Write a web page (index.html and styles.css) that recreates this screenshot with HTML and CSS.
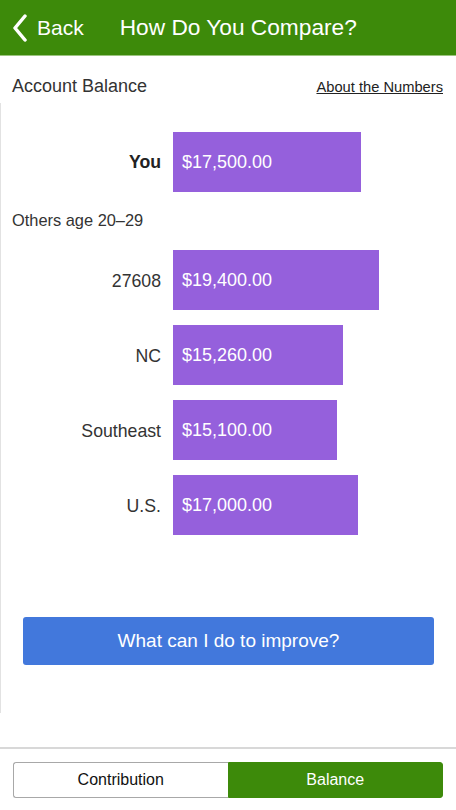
FILE: index.html
```html
<!DOCTYPE html>
<html lang="en">
<head>
    <meta charset="UTF-8">
    <meta name="viewport" content="width=device-width, initial-scale=1.0">
    <title>How Do You Compare?</title>
    <link rel="stylesheet" href="styles.css">
</head>
<body>
    <header class="topbar">
        <a class="back" href="#">
            <svg class="chevron" width="16" height="28" viewBox="0 0 16 28">
                <path d="M13 2 L3 14 L13 26" fill="none" stroke="#fff" stroke-width="3.5" stroke-linecap="round" stroke-linejoin="round"/>
            </svg>
            Back
        </a>
        <h1 class="title">How Do You Compare?</h1>
    </header>

    <div class="summary">
        <span class="summary-label">Account Balance</span>
        <a class="summary-link" href="#">About the Numbers</a>
    </div>

    <div class="chart">
        <div class="bar-row">
            <span class="bar-label you">You</span>
            <div class="bar" style="width: 188px">$17,500.00</div>
        </div>
        <div class="group-label">Others age 20&ndash;29</div>
        <div class="bar-row">
            <span class="bar-label">27608</span>
            <div class="bar" style="width: 206px">$19,400.00</div>
        </div>
        <div class="bar-row">
            <span class="bar-label">NC</span>
            <div class="bar" style="width: 170px">$15,260.00</div>
        </div>
        <div class="bar-row">
            <span class="bar-label">Southeast</span>
            <div class="bar" style="width: 164px">$15,100.00</div>
        </div>
        <div class="bar-row">
            <span class="bar-label">U.S.</span>
            <div class="bar" style="width: 185px">$17,000.00</div>
        </div>

        <button class="improve">What can I do to improve?</button>
    </div>

    <nav class="tabs">
        <a class="tab" href="#">Contribution</a>
        <a class="tab active" href="#">Balance</a>
    </nav>
</body>
</html>
```

FILE: styles.css
```css
body {
    font-family: "Liberation Sans", Arial, sans-serif;
    margin: 0;
    padding: 0;
    background-color: #fff;
    color: #333;
    width: 456px;
    height: 810px;
    overflow: hidden;
}
.topbar {
    display: flex;
    align-items: center;
    height: 55px;
    background-color: #3d8a0a;
    border-bottom: 1px solid #9cc47f;
    color: #fff;
}
.back {
    display: flex;
    align-items: center;
    gap: 9px;
    margin-left: 12px;
    color: #fff;
    text-decoration: none;
    font-size: 21px;
}
.title {
    margin: 0 0 0 36px;
    font-size: 22.7px;
    font-weight: normal;
}
.summary {
    display: flex;
    justify-content: space-between;
    align-items: center;
    height: 33px;
    padding: 14px 13px 0 12px;
}
.summary-label {
    font-size: 18px;
    color: #333;
}
.summary-link {
    font-size: 14.7px;
    color: #222;
    text-decoration: underline;
}
.chart {
    border-left: 1px solid #e2e2e2;
    height: 610px;
    padding-top: 29px;
    box-sizing: border-box;
}
.bar-row {
    display: flex;
    align-items: center;
    gap: 12px;
    margin-bottom: 15px;
}
.bar-label {
    width: 160px;
    padding-top: 2px;
    text-align: right;
    font-size: 17.7px;
    color: #333;
}
.bar-label.you {
    padding-top: 0;
    font-weight: bold;
    color: #222;
}
.bar {
    height: 60px;
    line-height: 60px;
    padding-left: 9px;
    box-sizing: border-box;
    background-color: #9560dc;
    color: #fff;
    font-size: 18px;
}
.group-label {
    margin: -15px 0 0 11px;
    height: 58px;
    line-height: 56px;
    font-size: 16.4px;
    color: #333;
}
.improve {
    display: block;
    width: 411px;
    height: 48px;
    margin: 82px 0 0 22px;
    padding: 0;
    border: none;
    border-radius: 3px;
    background-color: #4278dc;
    color: #fff;
    font-family: inherit;
    font-size: 19px;
    cursor: pointer;
}
.tabs {
    display: flex;
    margin-top: 34px;
    border-top: 2px solid #d8d8d8;
    padding: 13px 13px 0;
}
.tab {
    flex: 1;
    height: 36px;
    line-height: 34px;
    text-align: center;
    font-size: 16px;
    color: #111;
    text-decoration: none;
    border: 1px solid #a8a8a8;
    box-sizing: border-box;
}
.tab:first-child {
    border-radius: 3px 0 0 3px;
    border-right: none;
}
.tab.active {
    background-color: #3d8a0a;
    border-color: #3d8a0a;
    color: #fff;
    border-radius: 0 3px 3px 0;
}
```
